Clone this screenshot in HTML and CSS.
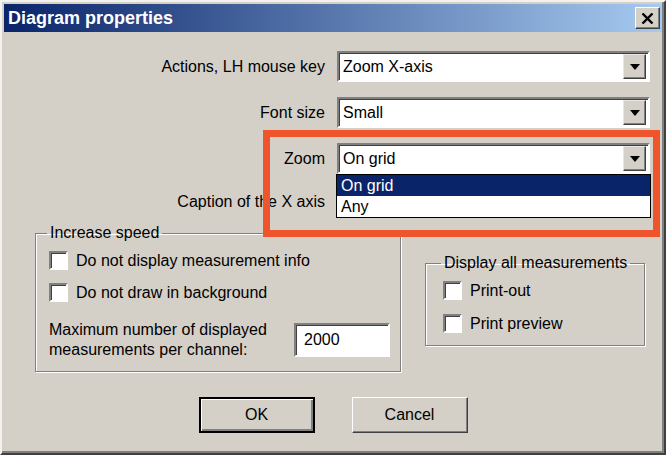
FILE: index.html
```html
<html>
<head>
<meta charset="UTF-8">
<link rel="stylesheet" href="styles.css">
</head>
<body>
<div class="window">
  <div class="titlebar">
    <span class="title">Diagram properties</span>
    <span class="close"><svg width="13" height="11" viewBox="0 0 13 11"><path d="M1.5 0.5 L11.5 10.5 M11.5 0.5 L1.5 10.5" stroke="#000" stroke-width="2.4"/></svg></span>
  </div>

  <div class="fields">
    <label>Actions, LH mouse key</label>
    <div class="combo"><span>Zoom X-axis</span><span class="drop"><i></i></span></div>
    <label>Font size</label>
    <div class="combo"><span>Small</span><span class="drop"><i></i></span></div>
    <label>Zoom</label>
    <div class="combo"><span>On grid</span><span class="drop"><i></i></span></div>
    <label class="last">Caption of the X axis</label>
    <div class="combo last"><span></span><span class="drop"><i></i></span></div>
  </div>

  <div class="groups">
    <fieldset class="group speed">
      <legend>Increase speed</legend>
      <div class="check"><span class="box"></span>Do not display measurement info</div>
      <div class="check"><span class="box"></span>Do not draw in background</div>
      <div class="maxrow">
        <span>Maximum number of displayed<br>measurements per channel:</span>
        <span class="edit">2000</span>
      </div>
    </fieldset>
    <fieldset class="group display">
      <legend>Display all measurements</legend>
      <div class="check"><span class="box"></span>Print-out</div>
      <div class="check"><span class="box"></span>Print preview</div>
    </fieldset>
  </div>

  <div class="buttons">
    <span class="btn default">OK</span>
    <span class="btn">Cancel</span>
  </div>

  <!-- open list of the Zoom combo -->
  <div class="droplist">
    <div class="item selected">On grid</div>
    <div class="item">Any</div>
  </div>

  <!-- red marker round the Zoom field -->
  <div class="marker"></div>
</div>
</body>
</html>
```

FILE: styles.css
```css
body {
  margin: 0;
  font-family: "Liberation Sans", Arial, sans-serif;
  font-size: 16px;
  color: #000;
}

.window {
  position: relative;
  width: 666px;
  height: 455px;
  box-sizing: border-box;
  background: #d4d0c8;
  border: 2px solid;
  border-color: #f4f2ee #404040 #404040 #f4f2ee;
  box-shadow: inset -2px -2px 0 #808080;
  padding: 2px;
}

/* Title bar */
.titlebar {
  height: 28px;
  display: flex;
  align-items: center;
  justify-content: space-between;
  background: linear-gradient(to right, #0a246a, #a6caf0);
  padding: 0 2px 0 4px;
}
.title {
  color: #fff;
  font-weight: bold;
  font-size: 18px;
}
.close {
  width: 25px;
  height: 22px;
  box-sizing: border-box;
  background: #d4d0c8;
  border: 1px solid;
  border-color: #fff #404040 #404040 #fff;
  box-shadow: inset -1px -1px 0 #808080;
  display: flex;
  align-items: center;
  justify-content: center;
}

/* Label + combo rows */
.fields {
  display: grid;
  grid-template-columns: 321px 313px;
  column-gap: 12px;
  row-gap: 15px;
  margin-top: 19px;
}
.fields label {
  text-align: right;
  align-self: center;
}
.fields .last {
  margin-top: -3px;
}
.combo {
  height: 31px;
  box-sizing: border-box;
  background: #fff;
  border: 2px solid;
  border-color: #808080 #fff #fff #808080;
  box-shadow: inset 1px 1px 0 #404040;
  display: flex;
  align-items: center;
  justify-content: space-between;
  padding: 0 2px 0 4px;
}
.drop {
  width: 23px;
  height: 25px;
  box-sizing: border-box;
  background: #d4d0c8;
  border: 1px solid;
  border-color: #e8e6e2 #404040 #404040 #e8e6e2;
  box-shadow: inset -1px -1px 0 #808080;
  display: flex;
  align-items: center;
  justify-content: center;
}
.drop i {
  width: 0;
  height: 0;
  border-left: 5px solid transparent;
  border-right: 5px solid transparent;
  border-top: 6px solid #000;
}

/* Group boxes */
.groups {
  display: flex;
  align-items: flex-start;
  gap: 24px;
  margin: 6px 0 0 31px;
}
.group {
  margin: 0;
  padding: 0 12px 0 13px;
  border: 1px solid #808080;
  box-shadow: 1px 1px 0 #fff, inset 1px 1px 0 #fff;
}
.group legend {
  padding: 0 3px;
  margin-left: -2px;
  line-height: 20px;
}
.speed {
  width: 366px;
  height: 149px;
  box-sizing: border-box;
}
.display {
  width: 220px;
  height: 93px;
  box-sizing: border-box;
  margin-top: 30px;
  padding-left: 17px;
}
.check {
  display: flex;
  align-items: center;
  gap: 8px;
  height: 19px;
  margin-top: 8px;
}
.speed .check + .check {
  margin-top: 13px;
}
.display .check + .check {
  margin-top: 14px;
}
.box {
  width: 19px;
  height: 19px;
  box-sizing: border-box;
  background: #fff;
  border: 2px solid;
  border-color: #808080 #fff #fff #808080;
  box-shadow: inset 1px 1px 0 #404040;
}
.maxrow {
  display: flex;
  align-items: center;
  justify-content: space-between;
  margin-top: 18px;
  line-height: 20px;
}
.edit {
  width: 96px;
  height: 34px;
  box-sizing: border-box;
  background: #fff;
  border: 2px solid;
  border-color: #808080 #fff #fff #808080;
  box-shadow: inset 1px 1px 0 #404040;
  display: flex;
  align-items: center;
  padding-left: 8px;
  margin-right: -2px;
}

/* OK / Cancel */
.buttons {
  display: flex;
  justify-content: center;
  gap: 37px;
  margin-top: 25px;
}
.btn {
  width: 116px;
  height: 36px;
  box-sizing: border-box;
  border: 1px solid;
  border-color: #fff #404040 #404040 #fff;
  box-shadow: inset -1px -1px 0 #808080;
  display: flex;
  align-items: center;
  justify-content: center;
}
.btn.default {
  border: 2px solid #000;
  box-shadow: inset 1px 1px 0 #fff, inset -2px -2px 0 #808080;
}

/* Opened list and marker drawn over the form */
.droplist {
  position: absolute;
  left: 334px;
  top: 172px;
  width: 315px;
  box-sizing: border-box;
  background: #fff;
  border: 1px solid #000;
}
.item {
  height: 21px;
  line-height: 21px;
  padding-left: 4px;
}
.item.selected {
  background: #0a246a;
  color: #fff;
}
.marker {
  position: absolute;
  left: 261px;
  top: 128px;
  width: 397px;
  height: 107px;
  box-sizing: border-box;
  border: 7px solid #ee552c;
}
```
